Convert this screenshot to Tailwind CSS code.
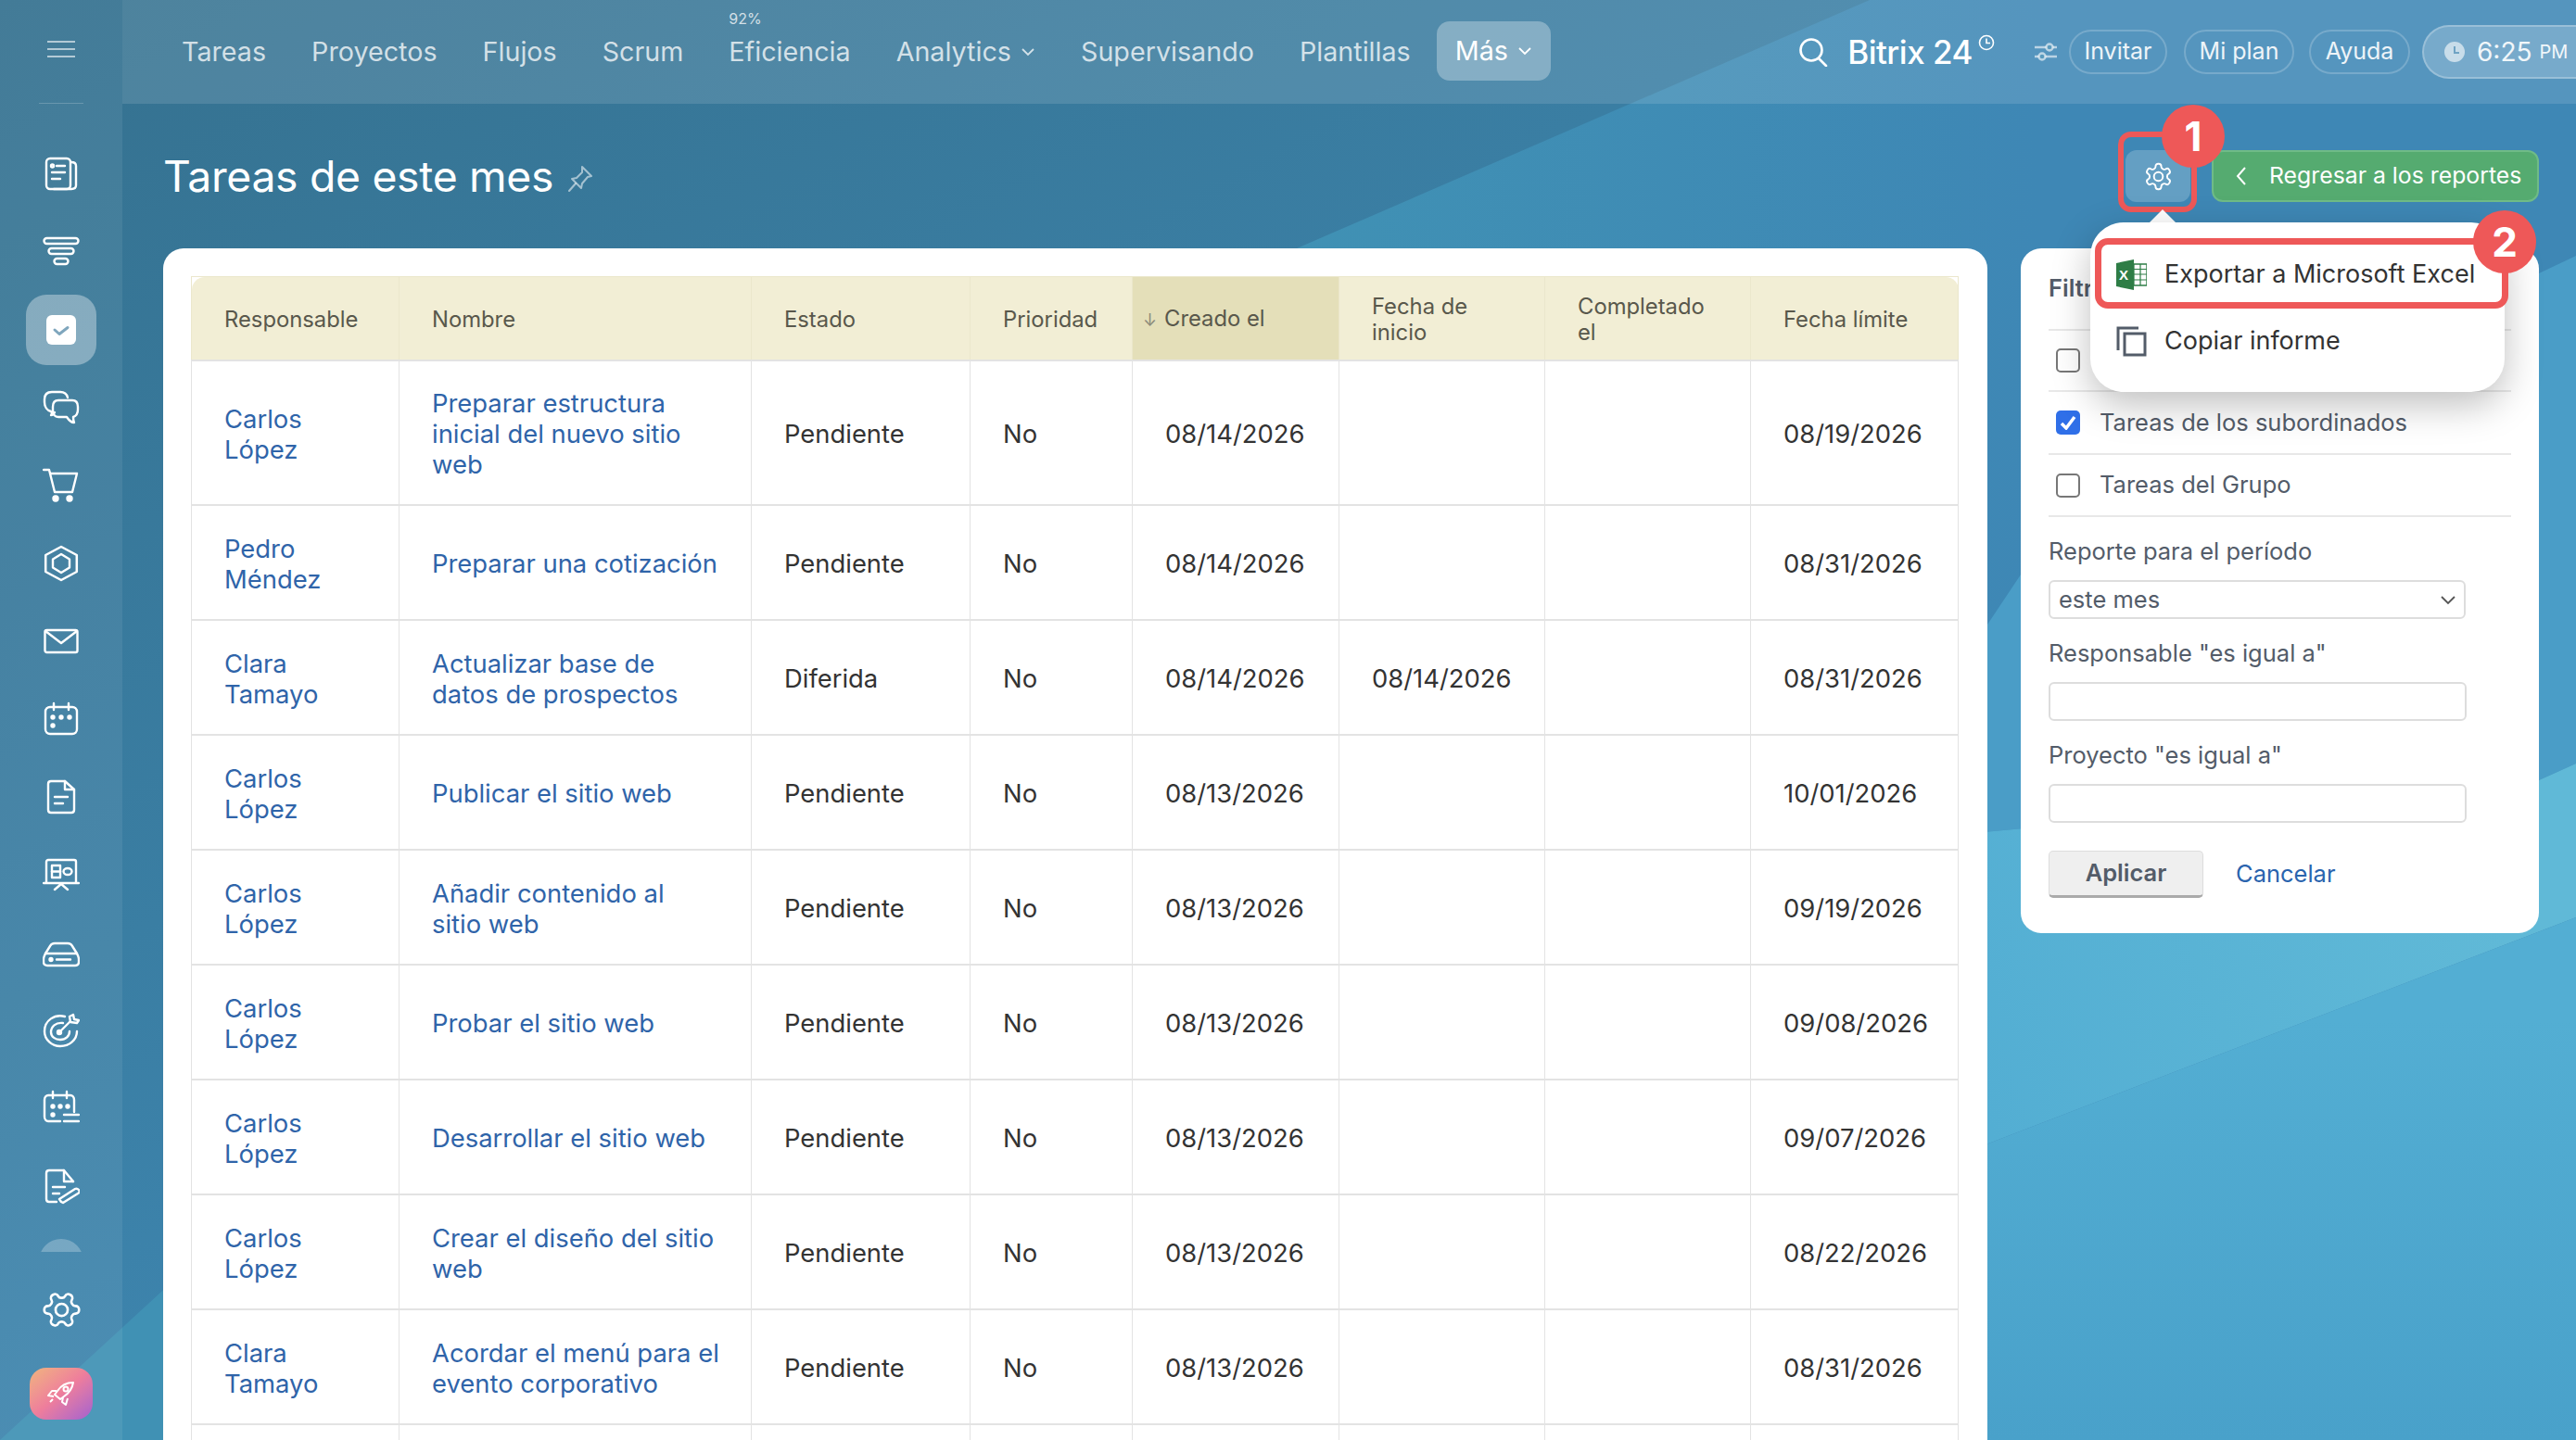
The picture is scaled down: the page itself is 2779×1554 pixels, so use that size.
<!DOCTYPE html>
<html lang="es">
<head>
<meta charset="UTF-8">
<title>Tareas de este mes</title>
<script src="https://cdn.jsdelivr.net/npm/@tailwindcss/browser@4"></script>
</head>
<body class="w-[2779px] h-[1554px] overflow-hidden relative font-['Inter','Liberation_Sans',sans-serif] text-[#333]">

<!-- wallpaper -->
<svg class="absolute inset-0 -z-10" width="2779" height="1554" viewBox="0 0 2779 1554">
  <defs>
    <linearGradient id="bg" x1="0" y1="0" x2="1" y2="1">
      <stop offset="0" stop-color="#35718f"/>
      <stop offset="0.35" stop-color="#3a7ea3"/>
      <stop offset="0.62" stop-color="#3f88b4"/>
      <stop offset="1" stop-color="#4ea6cc"/>
    </linearGradient>
    <linearGradient id="wedge" gradientUnits="userSpaceOnUse" x1="1400" y1="0" x2="2200" y2="0">
      <stop offset="0" stop-color="#4091b4"/>
      <stop offset="1" stop-color="#3e87b5"/>
    </linearGradient>
    <linearGradient id="streak" gradientUnits="userSpaceOnUse" x1="2140" y1="1200" x2="2700" y2="1000">
      <stop offset="0" stop-color="#53aed3"/>
      <stop offset="1" stop-color="#60b9d7"/>
    </linearGradient>
    <linearGradient id="low" gradientUnits="userSpaceOnUse" x1="0" y1="1100" x2="0" y2="1554">
      <stop offset="0" stop-color="#53aed3"/>
      <stop offset="1" stop-color="#49a1ca"/>
    </linearGradient>
  </defs>
  <rect width="2779" height="1554" fill="url(#bg)"/>
  <polygon points="2017,0 2779,0 2779,1554 0,1554 1399,268" fill="url(#wedge)"/>
  <polygon points="2140,680 2180,620 2300,500 2739,295 2779,276 2779,824 2739,842 2140,898" fill="#4a9dc7"/>
  <polygon points="2140,898 2739,842 2779,824 2779,990 2140,1236" fill="url(#streak)"/>
  <polygon points="2140,1236 2779,990 2779,1554 2140,1554" fill="url(#low)"/>
</svg>

<div class="flex h-full">
  <!-- sidebar -->
  <aside class="w-[132px] shrink-0 h-full bg-white/[0.07] flex flex-col items-center text-white">
    <div class="h-[112px] w-[48px] shrink-0 flex items-center justify-center border-b border-white/20 mb-[34px] pb-[5px]">
      <div class="w-[30px] flex flex-col gap-[6px]">
        <div class="h-[2px] bg-white/60"></div><div class="h-[2px] bg-white/60"></div><div class="h-[2px] bg-white/60"></div>
      </div>
    </div>
    <div class="flex flex-col [&>div]:h-[84px] [&>div]:w-[132px] [&>div]:flex [&>div]:items-center [&>div]:justify-center [&_svg]:fill-none [&_svg]:stroke-white [&_svg]:stroke-[2.4]">
      <div><svg width="40" height="40" viewBox="0 0 40 40" stroke-linecap="round" stroke-linejoin="round"><rect x="4" y="3" width="26" height="33" rx="4"/><path d="M31 7c3 0 5 1 5 4v21c0 3-2 4-5 4H12"/><path d="M15 11h9M10 18h14M10 25h9"/><circle cx="10.500" cy="11" r="1.500"/></svg></div>
      <div><svg width="40" height="40" viewBox="0 0 40 40"><rect x="1.500" y="5" width="37" height="6" rx="3"/><rect x="6.500" y="16" width="27" height="6" rx="3"/><rect x="12.500" y="27" width="15" height="6" rx="3"/></svg></div>
      <div class="relative"><div class="absolute left-[28px] top-[4px] w-[76px] h-[76px] rounded-[22px] bg-white/35"></div><svg class="relative !stroke-none" width="40" height="40" viewBox="0 0 40 40"><rect x="4" y="4" width="32" height="32" rx="6" fill="#fff" stroke="none"/><path d="M13 20l5 4.500 9-7" fill="none" style="stroke:#7fa6bd" stroke-width="3" stroke-linecap="round" stroke-linejoin="round"/></svg></div>
      <div><svg width="40" height="40" viewBox="0 0 40 40" stroke-linejoin="round" stroke-linecap="round"><path d="M13 25c-1 2-2 3-4 3 1-1 1-3 0-4C5 23 2 19 2 14v-3c0-5 3-8 8-8h9c4 0 7 2 8 6"/><path d="M17 12h15c4 0 6 3 6 7v3c0 4-2 7-5 8 0 2 0 4 1 6-3 0-6-3-8-6h-9c-4 0-6-3-6-7v-4c0-4 2-7 6-7z"/></svg></div>
      <div><svg width="40" height="40" viewBox="0 0 40 40" stroke-linecap="round" stroke-linejoin="round"><path d="M1 3h6l6 24h19l5-20H9"/><circle cx="14" cy="34" r="2.500" fill="#fff"/><circle cx="29" cy="34" r="2.500" fill="#fff"/></svg></div>
      <div><svg width="40" height="40" viewBox="0 0 40 40" stroke-linejoin="round"><path d="M20 2l16 9v18l-16 9-16-9V11z" transform="matrix(1.050 0 0 1 -1 0)"/><path d="M20 10l9 5.500v9L20 30l-9-5.500v-9z"/></svg></div>
      <div><svg width="40" height="40" viewBox="0 0 40 40" stroke-linejoin="round" stroke-linecap="round"><rect x="2.500" y="8" width="35" height="24" rx="2"/><path d="M3 9l17 13L37 9"/></svg></div>
      <div><svg width="40" height="40" viewBox="0 0 40 40" stroke-linecap="round"><rect x="3" y="7" width="34" height="29" rx="5"/><path d="M12 3v7M28 3v7"/><circle cx="11" cy="18" r="1.500" fill="#fff"/><circle cx="20" cy="18" r="1.500" fill="#fff"/><circle cx="29" cy="18" r="1.500" fill="#fff"/><circle cx="11" cy="27" r="1.500" fill="#fff"/></svg></div>
      <div><svg width="40" height="40" viewBox="0 0 40 40" stroke-linejoin="round" stroke-linecap="round"><path d="M24 3H9C7 3 6 4 6 6v28c0 2 1 3 3 3h22c2 0 3-1 3-3V12z"/><path d="M24 3v9h10M13 20h14M13 27h9"/></svg></div>
      <div><svg width="40" height="40" viewBox="0 0 40 40" stroke-linejoin="round" stroke-linecap="round"><path d="M4 29V6c0-1 1-2 2-2h28c1 0 2 1 2 2v23M1 29h38M13 36l7-6 7 6"/><rect x="10" y="10" width="9" height="13"/><path d="M10 16.500h9"/><ellipse cx="27" cy="16.500" rx="4.500" ry="3.500"/></svg></div>
      <div><svg width="40" height="40" viewBox="0 0 40 40" stroke-linejoin="round" stroke-linecap="round"><path d="M1 27c0-2 1-4 2-6l5-8c1-2 3-3 5-3h14c2 0 4 1 5 3l5 8c1 2 2 4 2 6v3c0 3-2 4-4 4H5c-2 0-4-1-4-4z"/><path d="M3 21h34M15 27.500h15"/><circle cx="9" cy="27.500" r="1.500" fill="#fff"/></svg></div>
      <div><svg width="40" height="40" viewBox="0 0 40 40" stroke-linecap="round" stroke-linejoin="round"><path d="M24 5C13 2 2 9 2 21c0 9 8 16 17 16 10 0 18-7 18-16"/><path d="M22 12c-8-1-13 4-13 10 0 5 5 8 10 8 6 0 10-4 10-9"/><path d="M18 22L30 10"/><circle cx="18" cy="22" r="2" fill="#fff"/><path d="M29 5l1 6 7 1 2-3-5-1-1-5z"/></svg></div>
      <div><svg width="40" height="40" viewBox="0 0 40 40" stroke-linecap="round"><path d="M34 24V11c0-3-2-5-4-5H6C4 6 2 8 2 11v18c0 3 2 5 4 5h13"/><path d="M11 2v7M26 2v7"/><circle cx="11" cy="18" r="1.500" fill="#fff"/><circle cx="19" cy="18" r="1.500" fill="#fff"/><circle cx="27" cy="18" r="1.500" fill="#fff"/><circle cx="11" cy="27" r="1.500" fill="#fff"/><path d="M23 27h16M23 34h16"/></svg></div>
      <div><svg width="40" height="40" viewBox="0 0 40 40" stroke-linejoin="round" stroke-linecap="round"><path d="M33 15L23 3H7C5 3 4 4 4 6v28c0 2 1 3 3 3h8"/><path d="M23 3v12h10M11 21h13M11 28h7"/><path d="M20 37l-2-3 17-11c2-1 3 0 4 1s1 3-1 4L22 38z"/></svg></div>
    </div>
    <div class="mt-[15px] w-[48px] h-[14px] overflow-hidden"><div class="w-[48px] h-[48px] rounded-full bg-white/25"></div></div>
    <div class="mt-[40px]"><svg width="45" height="45" viewBox="0 0 24 24" fill="none" stroke="#fff" stroke-width="1.400" transform="rotate(90)"><path d="M12.220 2h-.44a2 2 0 0 0-2 2v.18a2 2 0 0 1-1 1.730l-.43.25a2 2 0 0 1-2 0l-.15-.08a2 2 0 0 0-2.730.73l-.22.38a2 2 0 0 0 .73 2.730l.15.1a2 2 0 0 1 1 1.720v.51a2 2 0 0 1-1 1.740l-.15.09a2 2 0 0 0-.73 2.730l.22.38a2 2 0 0 0 2.730.73l.15-.08a2 2 0 0 1 2 0l.43.25a2 2 0 0 1 1 1.730V20a2 2 0 0 0 2 2h.44a2 2 0 0 0 2-2v-.18a2 2 0 0 1 1-1.730l.43-.25a2 2 0 0 1 2 0l.15.08a2 2 0 0 0 2.730-.73l.22-.39a2 2 0 0 0-.73-2.730l-.15-.08a2 2 0 0 1-1-1.740v-.5a2 2 0 0 1 1-1.740l.15-.09a2 2 0 0 0 .73-2.730l-.22-.38a2 2 0 0 0-2.730-.73l-.15.08a2 2 0 0 1-2 0l-.43-.25a2 2 0 0 1-1-1.730V4a2 2 0 0 0-2-2z"/><circle cx="12" cy="12" r="3.500"/></svg></div>
    <div class="mt-[40px] w-[68px] h-[56px] rounded-[18px] bg-gradient-to-br from-[#f0b47c] via-[#ee7d9c] to-[#a45fcf] flex items-center justify-center">
      <svg width="30" height="28" viewBox="0 0 30 28" fill="none" stroke="#fff" stroke-width="2" stroke-linejoin="round"><path d="M28 2c-7 0-13 3-17 9l-3 4 6 5 4-3c6-4 9-9 10-15z"/><circle cx="20" cy="9" r="2.500"/><path d="M10 11H5l-4 5 6 1M17 18l-1 5 4 3 2-7M6 20l-3 3"/></svg>
    </div>
  </aside>

  <div class="flex-1 flex flex-col min-w-0">
    <!-- top bar -->
    <header class="h-[112px] shrink-0 bg-white/[0.12] flex items-center text-[28.700px] text-white/75">
      <nav class="flex items-center ml-[64px] gap-[49px] whitespace-nowrap">
        <span>Tareas</span>
        <span>Proyectos</span>
        <span>Flujos</span>
        <span>Scrum</span>
        <span class="relative"><span class="absolute left-0 -top-[24px] text-[16px] leading-[20px]">92%</span>Eficiencia</span>
        <span class="flex items-center gap-[10px]">Analytics<svg width="16" height="10" viewBox="0 0 16 10" fill="none" stroke="currentColor" stroke-width="1.800"><path d="M2 2l6 6 6-6"/></svg></span>
        <span>Supervisando</span>
        <span>Plantillas</span>
      </nav>
      <div class="ml-[28px] h-[64px] -mt-[2px] px-[20px] rounded-[14px] bg-white/30 text-white flex items-center gap-[10px]">Más<svg width="16" height="10" viewBox="0 0 16 10" fill="none" stroke="currentColor" stroke-width="1.800"><path d="M2 2l6 6 6-6"/></svg></div>
      <div class="ml-auto flex items-center whitespace-nowrap">
        <svg width="34" height="32" viewBox="0 0 34 32" fill="none" stroke="#fff" stroke-width="2.600" stroke-linecap="round"><circle cx="14" cy="14" r="11.500"/><path d="M22 23l8 8"/></svg>
        <span class="ml-[19px] text-[35px] font-medium text-white leading-none tracking-[-0.5px]">Bitrix 24</span>
        <svg class="ml-[6px] -mt-[20px]" width="18" height="18" viewBox="0 0 18 18" fill="none" stroke="#fff" stroke-width="1.600"><circle cx="9" cy="9" r="7.500"/><path d="M9 4.500V9.500H13"/></svg>
        <svg class="ml-[43px] mr-[13px]" width="24" height="22" viewBox="0 0 24 22" fill="none" stroke="#fff" stroke-opacity=".6" stroke-width="2.400"><path d="M0 6h24M0 16h24"/><circle cx="16" cy="6" r="3.500" fill="#5a9abd"/><circle cx="8" cy="16" r="3.500" fill="#5a9abd"/></svg>
        <span class="h-[48px] w-[106px] flex items-center justify-center rounded-full border-2 border-white/20 text-[25px] text-white/90">Invitar</span>
        <span class="ml-[18px] h-[48px] w-[119px] flex items-center justify-center rounded-full border-2 border-white/20 text-[25px] text-white/90">Mi plan</span>
        <span class="ml-[16px] h-[48px] w-[109px] flex items-center justify-center rounded-full border-2 border-white/20 text-[25px] text-white/90">Ayuda</span>
        <div class="ml-[13px] h-[58px] w-[190px] -mr-[24px] pl-[22px] rounded-l-full bg-white/20 border-2 border-white/25 border-r-0 flex items-center">
          <svg width="22" height="22" viewBox="0 0 22 22"><circle cx="11" cy="11" r="11" fill="#fff" fill-opacity=".6"/><path d="M11 5v7h5" fill="none" stroke="#6fa3c4" stroke-width="2"/></svg>
          <span class="ml-[13px] text-[28px] text-white/90">6:25</span><span class="ml-[8px] text-[20px] text-white/90">PM</span>
        </div>
      </div>
    </header>

    <!-- title row -->
    <div class="h-[156px] shrink-0 flex items-center pl-[44px] pr-[40px]">
      <h1 class="text-[46.300px] font-normal text-white tracking-[-0.3px] mt-[2px]">Tareas de este mes</h1>
      <svg class="ml-[15px] mt-[6px]" width="28" height="30" viewBox="0 0 28 30" fill="none" stroke="#fff" stroke-opacity=".55" stroke-width="2" stroke-linejoin="round" stroke-linecap="round"><path d="M16 2l10 10-4 1-6 7-1 5-10-10 5-1 6-6z"/><path d="M9 20l-7 8"/></svg>
      <div class="ml-auto h-[56px] w-[70px] mr-[23px] rounded-[12px] bg-white/20 flex items-center justify-center">
        <svg width="33" height="33" viewBox="0 0 24 24" fill="none" stroke="#fff" stroke-width="1.400"><path d="M12.220 2h-.44a2 2 0 0 0-2 2v.18a2 2 0 0 1-1 1.730l-.43.25a2 2 0 0 1-2 0l-.15-.08a2 2 0 0 0-2.730.73l-.22.38a2 2 0 0 0 .73 2.730l.15.1a2 2 0 0 1 1 1.720v.51a2 2 0 0 1-1 1.740l-.15.09a2 2 0 0 0-.73 2.730l.22.38a2 2 0 0 0 2.730.73l.15-.08a2 2 0 0 1 2 0l.43.25a2 2 0 0 1 1 1.730V20a2 2 0 0 0 2 2h.44a2 2 0 0 0 2-2v-.18a2 2 0 0 1 1-1.730l.43-.25a2 2 0 0 1 2 0l.15.08a2 2 0 0 0 2.730-.73l.22-.39a2 2 0 0 0-.73-2.730l-.15-.08a2 2 0 0 1-1-1.740v-.5a2 2 0 0 1 1-1.740l.15-.09a2 2 0 0 0 .73-2.730l-.22-.38a2 2 0 0 0-2.730-.73l-.15.08a2 2 0 0 1-2 0l-.43-.25a2 2 0 0 1-1-1.730V4a2 2 0 0 0-2-2z"/><circle cx="12" cy="12" r="3.500"/></svg>
      </div>
      <div class="h-[56px] w-[353px] rounded-[12px] bg-[#55ab70] border-2 border-[#6fbb87] flex items-center pl-[24px] text-white text-[24.800px] whitespace-nowrap">
        <svg class="mr-[24px]" width="12" height="22" viewBox="0 0 12 22" fill="none" stroke="#fff" stroke-width="2"><path d="M10 2L2 11l8 9"/></svg>Regresar a los reportes
      </div>
    </div>

    <!-- content -->
    <div class="flex items-start pl-[44px] pr-[40px] gap-[36px]">
      <section class="w-[1968px] shrink-0 bg-white rounded-t-[22px] pt-[30px] pl-[30px] pr-[31px]">
        <table class="w-[1907px] table-fixed border-collapse text-[27.400px] leading-[33px] [&_td]:border [&_td]:border-[#e3e3e3] [&_td]:border-b-2 [&_td]:pl-[35px] [&_td]:pr-[30px] [&_td]:pt-[4px] [&_td]:h-[124px] [&_td:nth-child(-n+2)]:text-[#2f64a9] [&_th]:border [&_th]:border-[#ebe7cc] [&_th]:border-b-2 [&_th]:border-b-[#e3e3e3] [&_th]:font-normal [&_th]:text-left [&_th]:pl-[35px] [&_th]:pr-[30px] [&_th]:pt-[3px]">
          <colgroup>
            <col class="w-[224px]"><col class="w-[380px]"><col class="w-[236px]"><col class="w-[175px]"><col class="w-[223px]"><col class="w-[222px]"><col class="w-[222px]"><col class="w-[224px]">
          </colgroup>
          <thead class="bg-[#f2eed5] text-[23.800px] leading-[28px] text-[#59584c]">
            <tr class="h-[90px]">
              <th class="rounded-tl-[14px]">Responsable</th><th>Nombre</th><th>Estado</th><th>Prioridad</th>
              <th class="!pl-[11px] !pr-0 bg-[#e4dfb9]"><span class="inline-block align-middle mr-[8px] text-[18px] text-[#8d8c7c]">↓</span>Creado el</th>
              <th>Fecha de inicio</th><th>Completado el</th><th class="rounded-tr-[14px]">Fecha límite</th>
            </tr>
          </thead>
          <tbody>
            <tr class="[&>td]:!h-[156px]"><td>Carlos López</td><td>Preparar estructura inicial del nuevo sitio web</td><td>Pendiente</td><td>No</td><td>08/14/2026</td><td></td><td></td><td>08/19/2026</td></tr>
            <tr><td>Pedro Méndez</td><td>Preparar una cotización</td><td>Pendiente</td><td>No</td><td>08/14/2026</td><td></td><td></td><td>08/31/2026</td></tr>
            <tr><td>Clara Tamayo</td><td>Actualizar base de datos de prospectos</td><td>Diferida</td><td>No</td><td>08/14/2026</td><td>08/14/2026</td><td></td><td>08/31/2026</td></tr>
            <tr><td>Carlos López</td><td>Publicar el sitio web</td><td>Pendiente</td><td>No</td><td>08/13/2026</td><td></td><td></td><td>10/01/2026</td></tr>
            <tr><td>Carlos López</td><td>Añadir contenido al<br>sitio web</td><td>Pendiente</td><td>No</td><td>08/13/2026</td><td></td><td></td><td>09/19/2026</td></tr>
            <tr><td>Carlos López</td><td>Probar el sitio web</td><td>Pendiente</td><td>No</td><td>08/13/2026</td><td></td><td></td><td>09/08/2026</td></tr>
            <tr><td>Carlos López</td><td>Desarrollar el sitio web</td><td>Pendiente</td><td>No</td><td>08/13/2026</td><td></td><td></td><td>09/07/2026</td></tr>
            <tr><td>Carlos López</td><td>Crear el diseño del sitio web</td><td>Pendiente</td><td>No</td><td>08/13/2026</td><td></td><td></td><td>08/22/2026</td></tr>
            <tr><td>Clara Tamayo</td><td>Acordar el menú para el evento corporativo</td><td>Pendiente</td><td>No</td><td>08/13/2026</td><td></td><td></td><td>08/31/2026</td></tr>
            <tr><td></td><td></td><td></td><td></td><td></td><td></td><td></td><td></td></tr>
          </tbody>
        </table>
      </section>

      <!-- filter -->
      <aside class="w-[559px] shrink-0 h-[739px] bg-white rounded-[22px] px-[30px] text-[25.500px] text-[#535c69]">
        <div class="h-[89px] flex items-center font-semibold text-[#535c69] border-b-2 border-[#e8e8e8]">Filtro</div>
        <div class="h-[66px] flex items-center pl-[8px] gap-[21px] border-b-2 border-[#e8e8e8]"><span class="w-[26px] h-[26px] rounded-[5px] border-2 border-[#777]"></span></div>
        <div class="h-[68px] flex items-center pl-[8px] gap-[21px] border-b-2 border-[#e8e8e8]"><span class="w-[26px] h-[26px] rounded-[5px] bg-[#2f6fe8] flex items-center justify-center"><svg width="18" height="16" viewBox="0 0 18 16" fill="none" stroke="#fff" stroke-width="3.500"><path d="M2 9l5 5 9-12"/></svg></span>Tareas de los subordinados</div>
        <div class="h-[67px] flex items-center pl-[8px] gap-[21px] border-b-2 border-[#e8e8e8]"><span class="w-[26px] h-[26px] rounded-[5px] border-2 border-[#777]"></span>Tareas del Grupo</div>
        <div class="mt-[21px] leading-[32px]">Reporte para el período</div>
        <div class="mt-[15px] w-[450px] h-[42px] rounded-[6px] border-2 border-[#ddd] flex items-center justify-between pl-[9px] pr-[8px]">este mes<svg width="18" height="11" viewBox="0 0 18 11" fill="none" stroke="#555" stroke-width="1.800"><path d="M2 2l7 7 7-7"/></svg></div>
        <div class="mt-[21px] leading-[32px]">Responsable "es igual a"</div>
        <div class="mt-[15px] w-[451px] h-[42px] rounded-[6px] border-2 border-[#ddd]"></div>
        <div class="mt-[21px] leading-[32px]">Proyecto "es igual a"</div>
        <div class="mt-[15px] w-[451px] h-[42px] rounded-[6px] border-2 border-[#ddd]"></div>
        <div class="mt-[30px] flex items-center">
          <span class="w-[167px] h-[51px] rounded-[5px] bg-[#efefef] border border-[#ddd] border-b-[3px] border-b-[#aaa] flex items-center justify-center font-semibold">Aplicar</span>
          <span class="ml-[35px] text-[#2a64ae]">Cancelar</span>
        </div>
      </aside>
    </div>
  </div>
</div>

<!-- annotation frame on the gear -->
<div class="absolute left-[2285px] top-[142px] w-[85px] h-[87px] rounded-[14px] border-[6px] border-[#ee5858]"></div>

<!-- export menu -->
<div class="absolute left-[2319px] top-[226px] w-0 h-0 border-x-[14px] border-x-transparent border-b-[14px] border-b-white"></div>
<div class="absolute left-[2255px] top-[240px] w-[447px] h-[183px] rounded-[36px] bg-white shadow-[0_14px_40px_rgba(0,0,0,0.25)] text-[27px] text-[#333]">
  <div class="h-[56px] mt-[28px] flex items-center pl-[28px] gap-[19px]">
    <svg width="33" height="33" viewBox="0 0 33 33"><rect x="12" y="5" width="21" height="23" fill="#fff" stroke="#2e7d46" stroke-width="1.500"/><path d="M19 5v23M26 5v23M12 10.500h21M12 16h21M12 22h21" stroke="#2e7d46" stroke-width="1.200"/><path d="M0 4l19-4v33L0 29z" fill="#2e7d46"/><text x="3" y="22" font-size="15" font-family="Liberation Sans" font-weight="700" fill="#fff">X</text></svg>
    <span>Exportar a Microsoft Excel</span>
  </div>
  <div class="h-[56px] mt-[16px] flex items-center pl-[28px] gap-[19px]">
    <svg width="33" height="33" viewBox="0 0 33 33" fill="none" stroke="#535c69" stroke-width="3"><path d="M2 26V2h22"/><rect x="9" y="8" width="22" height="23" fill="#fff"/></svg>
    <span>Copiar informe</span>
  </div>
</div>
<div class="absolute left-[2260px] top-[257px] w-[446px] h-[76px] rounded-[14px] border-[7px] border-[#ee5858]"></div>

<!-- numbered badges -->
<div class="absolute left-[2332px] top-[113px] w-[68px] h-[68px] rounded-full bg-[#ee5858] text-white text-[44px] font-bold flex items-center justify-center">1</div>
<div class="absolute left-[2668px] top-[227px] w-[68px] h-[68px] rounded-full bg-[#ee5858] text-white text-[44px] font-bold flex items-center justify-center">2</div>

</body>
</html>
